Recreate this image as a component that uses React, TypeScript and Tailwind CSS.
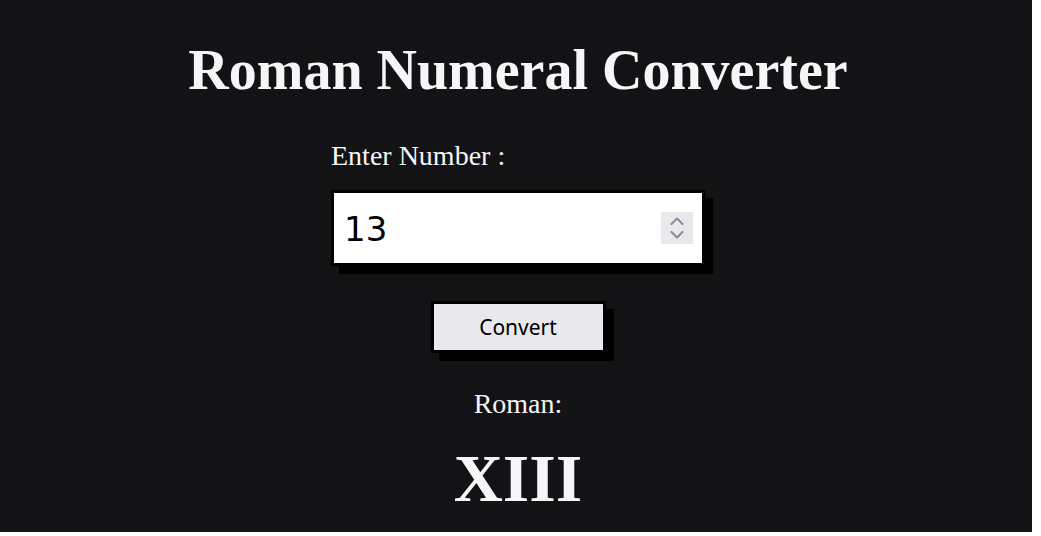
import React from "react";

export default function App() {
  return (
    <div className="w-[1032px] h-[532px] bg-[#131215] text-[#f5f6f7] flex flex-col items-center pl-[4px] font-['Liberation_Serif','Times_New_Roman',serif]">
      <h1 className="mt-[42px] text-[56px] leading-none font-bold">Roman Numeral Converter</h1>
      <div className="mt-[44px] w-[374px] flex flex-col">
        <label className="text-[28px] leading-none">Enter Number :</label>
        <div className="mt-[20px] h-[76px] w-[374px] border-[3px] border-black bg-white shadow-[8px_8px_0_#000] flex items-center pl-[10px] pr-[9px]">
          <input
            type="text"
            readOnly
            value="13"
            className="flex-1 min-w-0 pt-[3px] bg-transparent outline-none text-black text-[34px] font-['DejaVu_Sans',sans-serif]"
          />
          <div className="w-[32px] h-[32px] bg-[#e9e8ed] flex flex-col items-center justify-center gap-[6px]">
            <svg width="14" height="8" viewBox="0 0 14 8" fill="none" stroke="#8b8a94" strokeWidth="2" strokeLinecap="round" strokeLinejoin="round">
              <path d="M1.5 7 L7 1.5 L12.5 7" />
            </svg>
            <svg width="14" height="8" viewBox="0 0 14 8" fill="none" stroke="#8b8a94" strokeWidth="2" strokeLinecap="round" strokeLinejoin="round">
              <path d="M1.5 1 L7 6.5 L12.5 1" />
            </svg>
          </div>
        </div>
      </div>
      <button className="mt-[35px] w-[175px] h-[52px] pt-[2px] border-[3px] border-black bg-[#e9e8ed] text-black shadow-[8px_8px_0_#000] text-[21px] font-['Noto_Sans',sans-serif]">
        Convert
      </button>
      <p className="mt-[37px] text-[28px] leading-none">Roman:</p>
      <p className="mt-[26px] text-[68px] leading-none font-bold">XIII</p>
    </div>
  );
}
